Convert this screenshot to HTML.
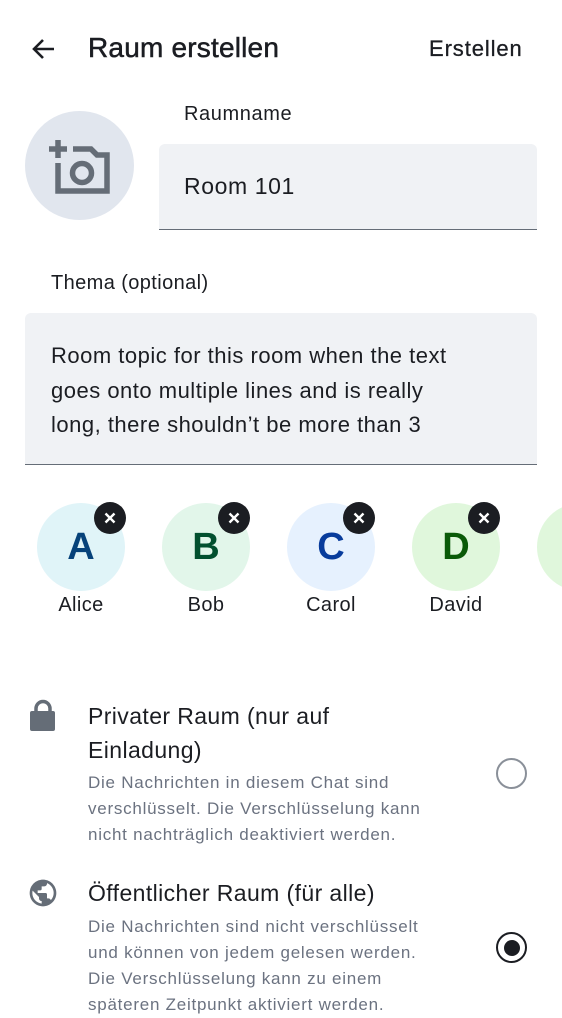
<!DOCTYPE html>
<html><head><meta charset="utf-8"><style>
*{margin:0;padding:0;box-sizing:border-box}
body{width:562px;height:1000px;overflow:hidden;background:#fff;font-family:"Liberation Sans",sans-serif;color:#1b1d22;position:relative}
.a{position:absolute}
.av{position:absolute;top:503px;width:88px;height:88px;border-radius:50%;font-weight:bold;font-size:38px;text-align:center;line-height:88px}
.x{position:absolute;top:502px;width:32px;height:32px;border-radius:50%;background:#1b1d22}
.nm{position:absolute;top:594px;width:100px;text-align:center;font-size:20px;letter-spacing:0.4px}
.sub{font-size:17px;color:#6b7280;line-height:26px;letter-spacing:0.75px;white-space:nowrap}
</style></head><body>
<svg class="a" style="left:28px;top:35px" width="30" height="30" viewBox="0 0 30 30"><path d="M26 14H7M15 5L6 14L15 23" fill="none" stroke="#1b1d22" stroke-width="2.6"/></svg>
<div class="a" style="left:88px;top:32px;font-size:28px;letter-spacing:0.2px;-webkit-text-stroke:0.5px #1b1d22">Raum erstellen</div>
<div class="a" style="left:429px;top:36px;font-size:22px;letter-spacing:0.9px;-webkit-text-stroke:0.3px #1b1d22">Erstellen</div>

<div class="a" style="left:25px;top:111px;width:109px;height:109px;border-radius:50%;background:#e1e6ee"></div>
<svg class="a" style="left:25px;top:111px" width="109" height="109" viewBox="0 0 109 109"><g fill="none" stroke="#656d77" stroke-width="5.5"><path d="M24 38H42M33 29V47"/><path d="M33 52V80H82V44H72L66 38H48"/><circle cx="57" cy="62" r="9.5"/></g></svg>

<div class="a" style="left:184px;top:103px;font-size:20px;letter-spacing:0.6px">Raumname</div>
<div class="a" style="left:159px;top:144px;width:378px;height:86px;background:#f0f2f5;border-radius:6px 6px 0 0;border-bottom:1.5px solid #656d77"></div>
<div class="a" style="left:184px;top:173px;font-size:23px;letter-spacing:0.6px">Room 101</div>

<div class="a" style="left:51px;top:272px;font-size:20px;letter-spacing:0.4px">Thema (optional)</div>
<div class="a" style="left:25px;top:313px;width:512px;height:152px;background:#f0f2f5;border-radius:6px 6px 0 0;border-bottom:1.5px solid #656d77"></div>
<div class="a" style="left:51px;top:339px;font-size:22px;line-height:34.5px;white-space:nowrap;letter-spacing:0.5px">Room topic for this room when the text<br>goes onto multiple lines and is really<br>long, there shouldn’t be more than 3</div>

<div class="av" style="left:37px;background:#e0f4f8;color:#06427a">A</div>
<div class="av" style="left:162px;background:#e2f6ea;color:#02502f">B</div>
<div class="av" style="left:287px;background:#e6f1fe;color:#083c9c">C</div>
<div class="av" style="left:412px;background:#e0f7dc;color:#0a5a08">D</div>
<div class="av" style="left:537px;background:#e0f7dc"></div>
<svg class="x" style="left:94px" viewBox="0 0 32 32"><path d="M11.5 11.5L20.5 20.5M20.5 11.5L11.5 20.5" stroke="#fff" stroke-width="2.4"/></svg>
<svg class="x" style="left:218px" viewBox="0 0 32 32"><path d="M11.5 11.5L20.5 20.5M20.5 11.5L11.5 20.5" stroke="#fff" stroke-width="2.4"/></svg>
<svg class="x" style="left:343px" viewBox="0 0 32 32"><path d="M11.5 11.5L20.5 20.5M20.5 11.5L11.5 20.5" stroke="#fff" stroke-width="2.4"/></svg>
<svg class="x" style="left:468px" viewBox="0 0 32 32"><path d="M11.5 11.5L20.5 20.5M20.5 11.5L11.5 20.5" stroke="#fff" stroke-width="2.4"/></svg>
<div class="nm" style="left:31px">Alice</div>
<div class="nm" style="left:156px">Bob</div>
<div class="nm" style="left:281px">Carol</div>
<div class="nm" style="left:406px">David</div>

<svg class="a" style="left:29px;top:698px" width="28" height="35" viewBox="0 0 28 35"><path d="M7 14V10.5A7 7 0 0 1 21 10.5V14" fill="none" stroke="#656d77" stroke-width="3.5"/><rect x="1" y="13" width="25" height="20" rx="2" fill="#656d77"/></svg>
<div class="a" style="left:88px;top:699px;font-size:23px;line-height:34px;width:300px;letter-spacing:0.4px">Privater Raum (nur auf Einladung)</div>
<div class="a sub" style="left:88px;top:770px">Die Nachrichten in diesem Chat sind<br>verschlüsselt. Die Verschlüsselung kann<br>nicht nachträglich deaktiviert werden.</div>
<div class="a" style="left:496px;top:758px;width:31px;height:31px;border-radius:50%;border:2.5px solid #8a9099"></div>

<svg class="a" style="left:27px;top:877px" width="32" height="32" viewBox="0 0 24 24"><path fill="#656d77" d="M12 2C6.48 2 2 6.48 2 12s4.48 10 10 10 10-4.48 10-10S17.52 2 12 2zm-1 17.93c-3.950-.49-7-3.85-7-7.93 0-.62.08-1.21.21-1.79L9 15v1c0 1.1.9 2 2 2v1.930zm6.9-2.540c-.26-.81-1-1.39-1.9-1.39h-1v-3c0-.55-.45-1-1-1H8v-2h2c.55 0 1-.45 1-1V7h2c1.1 0 2-.9 2-2v-.41c2.93 1.19 5 4.06 5 7.41 0 2.08-.8 3.97-2.1 5.39z"/></svg>
<div class="a" style="left:88px;top:876px;font-size:23px;line-height:34px;letter-spacing:0.4px">Öffentlicher Raum (für alle)</div>
<div class="a sub" style="left:88px;top:914px">Die Nachrichten sind nicht verschlüsselt<br>und können von jedem gelesen werden.<br>Die Verschlüsselung kann zu einem<br>späteren Zeitpunkt aktiviert werden.</div>
<div class="a" style="left:496px;top:932px;width:31px;height:31px;border-radius:50%;border:2.5px solid #1b1d22"></div>
<div class="a" style="left:503.5px;top:939.5px;width:16px;height:16px;border-radius:50%;background:#1b1d22"></div>
</body></html>
